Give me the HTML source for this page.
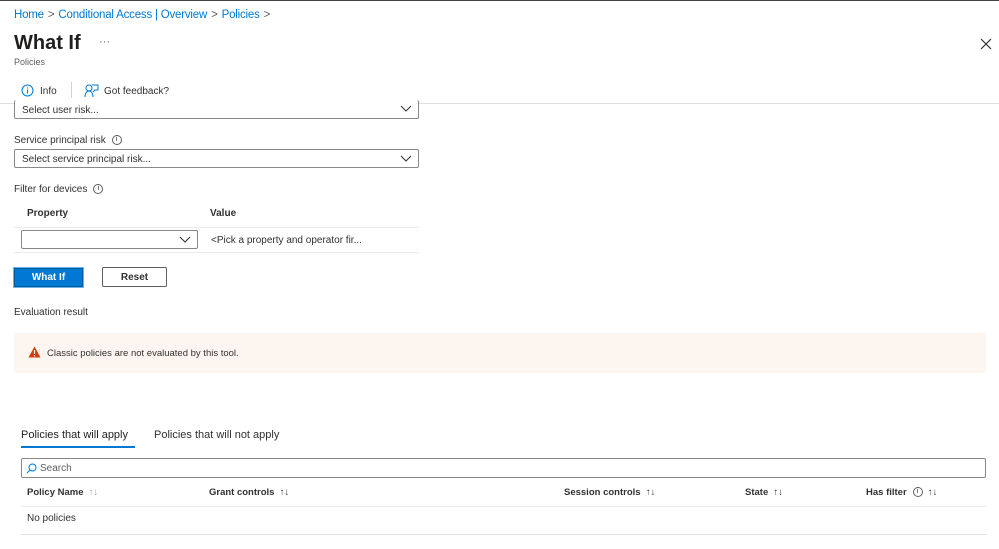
<!DOCTYPE html>
<html><head><style>
*{margin:0;padding:0;box-sizing:border-box}
body{width:999px;height:549px;background:#fff;font-family:"Liberation Sans",sans-serif;color:#323130;position:relative;overflow:hidden;font-size:10px}
.a{position:absolute;white-space:nowrap}
.sel{position:absolute;border:1px solid #8a8886;border-radius:2px;height:19px;background:#fff}
.sel span{position:absolute;left:7px;top:4px;font-size:10px}
.chev{position:absolute;right:6px;top:5px}
.blue{color:#0078d4}
.b{font-weight:bold}
.sep{color:#605e5c;margin:0 4px}
.info{display:inline-block;width:10px;height:10px;border:1px solid #605e5c;border-radius:50%;font-size:7px;text-align:center;line-height:8px;vertical-align:middle;margin-left:6px}
</style></head><body>
<div class="a" style="left:0;top:0;width:999px;height:1px;background:#444"></div>
<div class="a blue" style="left:14px;top:9px;font-size:11.5px;letter-spacing:-0.2px">Home<span class="sep">&gt;</span>Conditional Access | Overview<span class="sep">&gt;</span>Policies<span class="sep">&gt;</span></div>
<div class="a" style="left:14px;top:32px;font-size:20px;font-weight:bold;color:#201f1e">What If</div>
<div class="a" style="left:99px;top:36px;font-size:11px;color:#605e5c">···</div>
<div class="a" style="left:14px;top:57px;font-size:9px;color:#605e5c">Policies</div>
<svg class="a" style="left:980px;top:38px" width="12" height="12"><path d="M1 1L11 11M11 1L1 11" stroke="#323130" stroke-width="1.2"/></svg>
<svg class="a" style="left:21px;top:84px" width="13" height="13"><circle cx="6.5" cy="6.5" r="5.5" fill="none" stroke="#0078d4"/><path d="M6.5 5.5v4M6.5 3.5v1" stroke="#0078d4"/></svg>
<div class="a" style="left:40px;top:86px;font-size:10px">Info</div>
<div class="a" style="left:71px;top:82px;width:1px;height:16px;background:#d2d0ce"></div>
<svg class="a" style="left:84px;top:83px" width="15" height="15"><circle cx="5" cy="5" r="3" fill="none" stroke="#0078d4"/><path d="M1 14c0-4 2-6 4-6s4 2 4 6M8 2h6v5h-3l-2 2" fill="none" stroke="#0078d4"/></svg>
<div class="a" style="left:104px;top:86px;font-size:10px">Got feedback?</div>
<div class="a" style="left:0;top:103px;width:999px;height:1px;background:#e1dfdd"></div>

<div class="sel" style="left:14px;top:100px;width:405px;border-top:none;height:19px"><span style="top:5px">Select user risk...</span><svg class="chev" width="12" height="8"><path d="M1 1l5 5 5-5" fill="none" stroke="#323130"/></svg></div>
<div class="a" style="left:14px;top:135px">Service principal risk<span class="info">i</span></div>
<div class="sel" style="left:14px;top:149px;width:405px"><span>Select service principal risk...</span><svg class="chev" width="12" height="8"><path d="M1 1l5 5 5-5" fill="none" stroke="#323130"/></svg></div>
<div class="a" style="left:14px;top:184px">Filter for devices<span class="info">i</span></div>
<div class="a" style="left:27px;top:208px;font-weight:bold">Property</div>
<div class="a" style="left:210px;top:208px;font-weight:bold">Value</div>
<div class="a" style="left:14px;top:227px;width:405px;height:1px;background:#edebe9"></div>
<div class="sel" style="left:21px;top:230px;width:177px"><svg class="chev" width="12" height="8"><path d="M1 1l5 5 5-5" fill="none" stroke="#323130"/></svg></div>
<div class="a" style="left:211px;top:235px;color:#323130">&lt;Pick a property and operator fir...</div>
<div class="a" style="left:14px;top:252px;width:405px;height:1px;background:#edebe9"></div>
<div class="a b" style="left:14px;top:268px;width:69px;height:19px;background:#0078d4;color:#fff;text-align:center;line-height:18px;border:1px solid #005a9e;box-shadow:0 0 0 1px #6fb3ee">What If</div>
<div class="a" style="left:102px;top:267px;width:65px;height:20px;border:1px solid #605e5c;border-radius:2px;text-align:center;line-height:19px;font-weight:bold">Reset</div>
<div class="a" style="left:14px;top:307px">Evaluation result</div>
<div class="a" style="left:14px;top:333px;width:972px;height:40px;background:#fdf6f0"></div>
<svg class="a" style="left:28px;top:346px" width="13" height="12"><path d="M6.5 0.5L12.5 11.5H0.5Z" fill="#d83b01"/><path d="M6.5 4v4M6.5 9v1.5" stroke="#fff" stroke-width="1.2"/></svg>
<div class="a" style="left:47px;top:348px;font-size:9.5px">Classic policies are not evaluated by this tool.</div>

<div class="a" style="left:21px;top:429px;font-size:11px;color:#201f1e">Policies that will apply</div>
<div class="a" style="left:21px;top:446px;width:114px;height:2px;background:#0078d4"></div>
<div class="a" style="left:154px;top:429px;font-size:11px">Policies that will not apply</div>
<div class="a" style="left:21px;top:458px;width:965px;height:20px;border:1px solid #8a8886;border-radius:2px"></div>
<svg class="a" style="left:26px;top:463px" width="11" height="11"><circle cx="6.5" cy="4.5" r="3.5" fill="none" stroke="#0078d4"/><path d="M4 7L1 10" stroke="#0078d4"/></svg>
<div class="a" style="left:40px;top:463px;font-size:10px;color:#605e5c">Search</div>
<div class="a b" style="left:27px;top:487px;font-size:9.5px">Policy Name <span style="font-weight:normal;color:#a19f9d">&nbsp;↑↓</span></div>
<div class="a b" style="left:209px;top:487px;font-size:9.5px">Grant controls <span style="font-weight:normal">&nbsp;↑↓</span></div>
<div class="a b" style="left:564px;top:487px;font-size:9.5px">Session controls <span style="font-weight:normal">&nbsp;↑↓</span></div>
<div class="a b" style="left:745px;top:487px;font-size:9.5px">State <span style="font-weight:normal">&nbsp;↑↓</span></div>
<div class="a b" style="left:866px;top:487px;font-size:9.5px">Has filter<span class="info" style="font-weight:normal">i</span> <span style="font-weight:normal">&nbsp;↑↓</span></div>
<div class="a" style="left:21px;top:506px;width:965px;height:1px;background:#edebe9"></div>
<div class="a" style="left:27px;top:513px;font-size:10px">No policies</div>
<div class="a" style="left:21px;top:534px;width:965px;height:1px;background:#e1dfdd"></div>
</body></html>
